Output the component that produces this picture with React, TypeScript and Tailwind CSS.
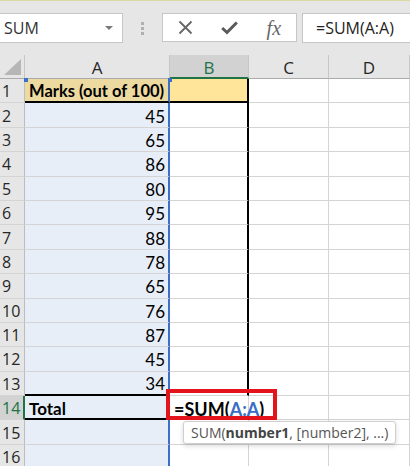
import React from 'react';

const marks = [45, 65, 86, 80, 95, 88, 78, 65, 76, 87, 45, 34];

const ui = { fontFamily: '"Open Sans", "Noto Sans", sans-serif' };
const cellFont = { fontFamily: 'Lato, "Open Sans", sans-serif' };

function RowHead({ n, active }: { n: number; active?: boolean }) {
    return (
        <div
            style={ui}
            className={`w-[25px] shrink-0 flex items-center pl-[2px] pt-[1px] text-[16px] leading-none border-b border-[#d4d4d4] ${active ? 'bg-[#d2d2d2] text-[#217346] border-r-2 border-r-[#217346]' : 'bg-[#e6e6e6] text-[#262626] border-r border-r-[#bdbdbd]'}`}
        >
            {n}
        </div>
    );
}

export default function App() {
    const rows = Array.from({ length: 16 }, (_, i) => i + 1);

    return (
        <div className="relative w-[410px] h-[466px] overflow-hidden bg-white">
            {/* formula bar */}
            <div className="h-[55px] bg-[#e6e6e6] border-t border-[#dcd8a2] flex items-start pt-[12px]">
                <div style={ui} className="w-[123px] h-[30px] bg-white border border-[#c6c6c6] border-l-0 flex items-center justify-between pl-[4px] pr-[9px] text-[16px] text-[#333]">
                    <span>SUM</span>
                    <span className="w-0 h-0 border-l-[4px] border-r-[4px] border-t-[4px] border-l-transparent border-r-transparent border-t-[#7a7a7a]" />
                </div>
                <div className="w-[39px] flex justify-center pt-[9px]">
                    <div className="flex flex-col gap-[2px]">
                        <span className="w-[3px] h-[3px] bg-[#b0b0b0]" />
                        <span className="w-[3px] h-[3px] bg-[#b0b0b0]" />
                        <span className="w-[3px] h-[3px] bg-[#b0b0b0]" />
                    </div>
                </div>
                <div className="w-[135px] h-[29px] bg-white border border-[#c6c6c6] flex items-center">
                    <div className="w-[45px] flex justify-center">
                        <svg width="15" height="15" viewBox="0 0 15 15">
                            <path d="M1.5 1.5 L13.5 13.5 M13.5 1.5 L1.5 13.5" stroke="#666" strokeWidth="1.8" />
                        </svg>
                    </div>
                    <div className="w-[45px] flex justify-center">
                        <svg width="17" height="14" viewBox="0 0 17 14">
                            <path d="M1.2 7 L6 11.5 L15.8 1.5" stroke="#5a5a5a" strokeWidth="3" fill="none" />
                        </svg>
                    </div>
                    <div className="w-[45px] flex justify-center">
                        <span style={{ fontFamily: '"Liberation Serif", serif' }} className="italic text-[20px] text-[#666] leading-none">fx</span>
                    </div>
                </div>
                <div style={ui} className="ml-[5px] flex-1 h-[30px] bg-white border border-[#c6c6c6] border-r-0 flex items-center pl-[13px] text-[16px] text-[#222]">
                    =SUM(A:A)
                </div>
            </div>

            {/* column headers */}
            <div style={ui} className="h-[24px] flex text-[17px] text-[#262626] leading-none">
                <div className="w-[25px] shrink-0 bg-[#e6e6e6] border-r border-[#c6c6c6] border-b border-b-[#ababab] flex items-end justify-end pr-[3px] pb-[3px]">
                    <svg width="17" height="16" viewBox="0 0 17 16">
                        <path d="M17 0 L17 16 L0 16 Z" fill="#b6b6b6" />
                    </svg>
                </div>
                <div className="w-[145px] shrink-0 bg-[#e6e6e6] border-r border-[#c6c6c6] border-b border-b-[#ababab] flex items-center justify-center pt-[2px]">A</div>
                <div className="w-[79px] shrink-0 bg-[#d2d2d2] border-r border-[#c6c6c6] border-b-2 border-b-[#217346] flex items-center justify-center pt-[2px] text-[#217346]">B</div>
                <div className="w-[80px] shrink-0 bg-[#e6e6e6] border-r border-[#c6c6c6] border-b border-b-[#ababab] flex items-center justify-center pt-[2px]">C</div>
                <div className="w-[81px] shrink-0 bg-[#e6e6e6] border-r border-[#c6c6c6] border-b border-b-[#ababab] flex items-center justify-center pt-[2px]">D</div>
            </div>

            {/* grid */}
            {rows.map((r) => {
                const isHead = r === 1;
                const isTotal = r === 14;
                const val = r >= 2 && r <= 13 ? marks[r - 2] : null;
                const aBorderB = r === 1 || r === 13 || r === 14 ? 'border-b-2 border-b-black' : 'border-b border-b-[#d4d4d4]';
                const bBorderB = r === 1 ? 'border-b-2 border-b-black' : 'border-b border-b-[#d4d4d4]';
                const bBorderR = r <= 13 ? 'border-r-2 border-r-black' : 'border-r border-r-[#d4d4d4]';
                return (
                    <div key={r} style={cellFont} className="h-[24.4px] flex text-[17px] text-black leading-none">
                        <RowHead n={r} active={isTotal} />
                        <div className={`w-[145px] shrink-0 flex items-center pt-[2px] border-r-2 border-r-[#3c6fc6] ${aBorderB} ${isHead ? 'bg-[#eddaa0] font-bold pl-[3px] text-[16.5px]' : 'bg-[#e8eef8]'} ${val !== null ? 'justify-end pr-[3px]' : 'pl-[4px]'} ${isTotal ? 'font-bold' : ''}`}>
                            {isHead ? 'Marks (out of 100)' : isTotal ? 'Total' : val}
                        </div>
                        <div className={`w-[79px] shrink-0 flex items-center pt-[2px] ${bBorderR} ${bBorderB} ${isHead ? 'bg-[#fee599]' : 'bg-white'}`}>
                            {isTotal && (
                                <span className="pl-[4px] whitespace-nowrap font-bold text-[18px]">
                                    =SUM(<span className="text-[#3a6ec5]">A:A</span>)
                                </span>
                            )}
                        </div>
                        <div className="w-[80px] shrink-0 border-r border-r-[#d4d4d4] border-b border-b-[#d4d4d4]" />
                        <div className="w-[81px] shrink-0 border-r border-r-[#d4d4d4] border-b border-b-[#d4d4d4]" />
                    </div>
                );
            })}

            {/* range handles */}
            <span className="absolute left-[24px] top-[78px] w-[4px] h-[4px] bg-[#3c6fc6]" />
            <span className="absolute left-[168px] top-[78px] w-[4px] h-[4px] bg-[#3c6fc6]" />

            {/* red annotation box */}
            <div className="absolute left-[166px] top-[389px] w-[111px] h-[31px] border-[4px] border-[#e3141c]" />

            {/* tooltip */}
            <div style={ui} className="absolute left-[183px] top-[421px] h-[23px] px-[7px] flex items-center bg-white border border-[#cfcfcf] rounded-[3px] shadow-[0_2px_5px_rgba(0,0,0,0.15)] text-[14px] text-[#555] whitespace-nowrap">
                SUM(<b className="text-[#444]">number1</b>, [number2], ...)
            </div>
        </div>
    );
}
